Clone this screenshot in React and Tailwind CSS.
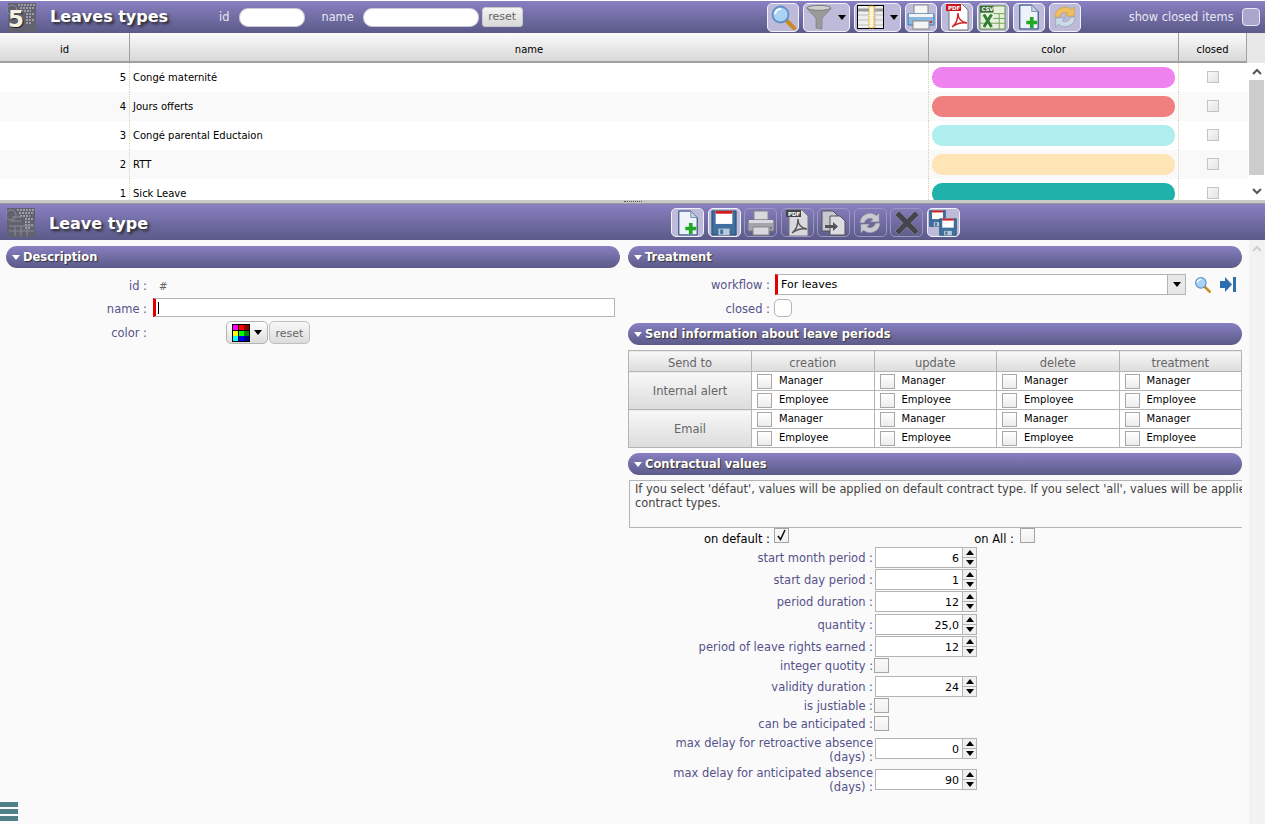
import React from 'react';

const FONT = 'font-["DejaVu_Sans",Verdana,sans-serif]';

const leaveTypes = [
  { id: 5, name: 'Congé maternité', color: '#ee82ee' },
  { id: 4, name: 'Jours offerts', color: '#f08080' },
  { id: 3, name: 'Congé parental Eductaion', color: '#afeeee' },
  { id: 2, name: 'RTT', color: '#ffe4b5' },
  { id: 1, name: 'Sick Leave', color: '#20b2aa' },
];

// --- icons ---
function Logo({ five }) {
  return (
    <svg width="30" height="31" viewBox="0 0 30 31" className="shrink-0">
      <rect x="1" y="1" width="28" height="29" fill="#62626f" />
      <path d="M11 3h17M13 6h15M14 9h10M19 12h8M19 15h6M19 18h8M19 21h5" stroke="#d8d8e0" strokeWidth="1" strokeDasharray="2 1" />
      <circle cx="5" cy="8" r="5" fill="none" stroke="#8a8a9c" strokeWidth="1" />
      {five ? (
        <>
          <text x="2" y="26" fontSize="23" fontWeight="700" fill="#1c1c24" fontFamily="DejaVu Sans">5</text>
          <text x="1" y="25" fontSize="23" fontWeight="700" fill="#f6f2e2" fontFamily="DejaVu Sans">5</text>
        </>
      ) : (
        <path d="M6 10h9M5 14h10M3 19h25M3 24h25M9 19v10M15 19v10M21 19v10" stroke="#8a8a98" strokeWidth="1" fill="none" />
      )}
    </svg>
  );
}

const Caret = () => (
  <svg width="8" height="5" viewBox="0 0 8 5"><path d="M0 0h8L4 5z" fill="#000" /></svg>
);

const SearchIcon = ({ size = 26 }) => (
  <svg width={size} height={size} viewBox="0 0 26 26">
    <path d="M16 16l8 8" stroke="#c98a20" strokeWidth="4" strokeLinecap="round" />
    <circle cx="10.500" cy="10.500" r="8" fill="#a9d2f5" stroke="#5d90c8" strokeWidth="1.800" />
    <path d="M5 10a6 6 0 0 1 6-5" stroke="#fff" strokeWidth="2" fill="none" />
  </svg>
);

const FunnelIcon = () => (
  <svg width="26" height="26" viewBox="0 0 26 26">
    <ellipse cx="13" cy="4" rx="12" ry="2.600" fill="#d0d0d0" stroke="#777" />
    <path d="M1 4c3 5 8 8 9 11v9l6 1V15c1-3 6-6 9-11-4 3-20 3-24 0z" fill="#9a9a9a" stroke="#777" strokeWidth=".6" />
  </svg>
);

const ColumnsIcon = () => (
  <svg width="27" height="24" viewBox="0 0 27 24">
    <rect x=".5" y=".5" width="26" height="23" fill="#eee" stroke="#000" />
    <path d="M1 5h25" stroke="#999" strokeWidth="3" />
    <path d="M18 1v22M1 10h25M1 15h25M1 20h25" stroke="#bbb" />
    <rect x="12" y="1" width="5" height="22" fill="#fdf6d8" stroke="#e69a00" strokeDasharray="1.500 1" />
  </svg>
);

const PrintIcon = ({ off }) => {
  const c = off ? ['#d8d8de', '#a4a4ae', '#77778a'] : ['#f4f4f4', '#8ab8dc', '#3f7fb5'];
  return (
    <svg width="28" height="26" viewBox="0 0 28 26">
      <rect x="7" y="1" width="14" height="9" fill={c[0]} stroke="#888" />
      <path d="M1 10h26v11H1z" fill={c[1]} stroke={c[2]} />
      <rect x="2" y="10" width="24" height="3" fill={c[0]} />
      <rect x="6" y="17" width="16" height="8" fill={c[0]} stroke="#888" />
      <rect x="23" y="17" width="2" height="2" fill={off ? '#777' : '#d22'} />
    </svg>
  );
};

const PdfIcon = ({ off }) => (
  <svg width="24" height="28" viewBox="0 0 24 28">
    <path d="M4 1h13l6 6v20H4z" fill={off ? '#d8d8de' : '#fff'} stroke="#777" />
    <rect x="1" y="1" width="15" height="7" fill={off ? '#444' : '#c8161d'} />
    <text x="3" y="6.500" fontSize="5.500" fontWeight="700" fill="#fff" fontFamily="DejaVu Sans">PDF</text>
    <path d="M7 24c4-3 6-8 6-14 0 6 3 9 9 10-6-1-11 1-15 4z" fill="none" stroke={off ? '#555' : '#d02020'} strokeWidth="1.400" />
  </svg>
);

const ExcelIcon = () => (
  <svg width="27" height="25" viewBox="0 0 28 26">
    <rect x="1" y="1" width="26" height="24" fill="#e6f0dc" stroke="#5d8a4a" />
    <rect x="1" y="1" width="14" height="7" fill="#3d6b35" />
    <text x="2.500" y="6.500" fontSize="5.500" fontWeight="700" fill="#fff" fontFamily="DejaVu Sans">CSV</text>
    <path d="M15 9h12M15 14h12M15 19h12M21 9v16M1 19h14" stroke="#6fa35a" />
    <path d="M5 10l8 13M13 10L5 23" stroke="#2e7d32" strokeWidth="3" />
  </svg>
);

const NewIcon = () => (
  <svg width="22" height="26" viewBox="0 0 24 28">
    <path d="M2 1h13l7 7v19H2z" fill="#eef3fb" stroke="#0a2a6a" />
    <path d="M15 1v7h7z" fill="#c4d4ea" stroke="#7a8cab" />
    <path d="M13 14h4v4h4v4h-4v4h-4v-4H9v-4h4z" fill="#22a822" />
  </svg>
);

const RefreshIcon = ({ off }) => {
  const a = off ? '#c8c8d0' : '#efc060';
  const b = off ? '#c8c8d0' : '#ccdce6';
  const edge = off ? '#77778a' : '#8c96a8';
  return (
    <svg width="26" height="26" viewBox="0 0 28 28">
      <path d="M3 14a11 11 0 0 1 18-8l3-3v10H14l3-3a6 6 0 0 0-9 4z" fill={a} stroke={off ? edge : '#c49a40'} strokeWidth=".7" />
      <path d="M25 14a11 11 0 0 1-18 8l-3 3V15h10l-3 3a6 6 0 0 0 9-4z" fill={b} stroke={edge} strokeWidth=".7" />
    </svg>
  );
};

const SaveIcon = ({ x = 0, y = 0, s = 26 }) => (
  <svg width={s} height={s} viewBox="0 0 28 28" x={x} y={y}>
    <path d="M1 1h26v26H1z" fill="#3e6f9e" stroke="#23476b" />
    <rect x="5" y="1" width="18" height="14" fill="#fff" />
    <rect x="5" y="1" width="18" height="3" fill="#d01c1c" />
    <rect x="8" y="20" width="12" height="7" fill="#b8c8d8" />
    <rect x="10" y="21" width="3" height="5" fill="#3e6f9e" />
  </svg>
);

const CopyIcon = () => (
  <svg width="26" height="26" viewBox="0 0 26 26">
    <path d="M1 1h11l4 4v16H1z" fill="#c8c8d0" stroke="#555" />
    <path d="M9 6h10l5 5v14H9z" fill="#dcdce2" stroke="#555" />
    <path d="M4 15h8v-3l5 4.500-5 4.500v-3H4z" fill="#555" />
  </svg>
);

const CrossIcon = () => (
  <svg width="26" height="26" viewBox="0 0 26 26">
    <path d="M5 1l8 8 8-8 4 4-8 8 8 8-4 4-8-8-8 8-4-4 8-8-8-8z" fill="#45454f" stroke="#8a8a94" strokeWidth=".7" />
  </svg>
);

const SaveAllIcon = () => (
  <svg width="28" height="26" viewBox="0 0 28 26">
    <SaveIcon x={0} y={0} s={17} />
    <SaveIcon x={10} y={8} s={18} />
  </svg>
);

const PaletteIcon = () => (
  <svg width="18" height="18" viewBox="0 0 18 18" shapeRendering="crispEdges">
    <rect width="18" height="18" fill="#000" />
    {['#f0f', '#f00', '#800', '#ff0', '#0f0', '#080', '#0ff', '#00f', '#008'].map((c, i) => (
      <rect key={i} x={1 + (i % 3) * 5.5} y={1 + Math.floor(i / 3) * 5.5} width="5" height="5" fill={c} />
    ))}
  </svg>
);

const GoIcon = () => (
  <svg width="16" height="15" viewBox="0 0 16 15">
    <path d="M0 4h5V0l7 7.500-7 7.500v-4H0z" fill="#2f6fb0" />
    <rect x="13" y="0" width="3" height="15" fill="#2f6fb0" />
  </svg>
);

const Chevron = ({ up, color = '#555' }) => (
  <svg width="10" height="7" viewBox="0 0 10 7" fill="none">
    <path d={up ? 'M1 6l4-4 4 4' : 'M1 1l4 4 4-4'} stroke={color} strokeWidth="2" />
  </svg>
);

// --- toolbar ---
function ToolBtn({ children, off, wide, narrow }) {
  return (
    <div
      className={`flex items-center justify-center gap-[6px] rounded-[5px] border h-[29px] overflow-hidden ${wide ? 'w-[47px]' : narrow ? 'w-[32px]' : 'w-[33px]'} ${
        off ? 'border-[#9a97c0] bg-transparent' : 'border-[#f0f0f8] bg-[#bdbbd9]'
      }`}
    >
      {children}
    </div>
  );
}

const bar = 'bg-gradient-to-b from-[#8880c2] to-[#5b5a88]';

function SmallCheck({ checked, soft }) {
  return (
    <div
      className={`w-[15px] h-[15px] shrink-0 border flex items-center justify-center ${
        soft ? 'border-[#a4a4a4] bg-gradient-to-b from-[#fafafa] to-[#f0f0f0]' : 'border-[#a8a8a8] bg-gradient-to-b from-[#fff] to-[#ececec]'
      }`}
    >
      {checked && (
        <svg width="13" height="13" viewBox="0 0 13 13" fill="none">
          <path d="M3 7l2.500 3.500L10 1" stroke="#111" strokeWidth="1.600" />
        </svg>
      )}
    </div>
  );
}

function Section({ title, className = '' }) {
  return (
    <div className={`h-[22px] rounded-[11px] ${bar} flex items-center pl-[6px] gap-[3px] text-[11.500px] font-bold text-white [text-shadow:1px_1px_1px_#333] ${className}`}>
      <svg width="8" height="5" viewBox="0 0 8 5"><path d="M0 0h8L4 5z" fill="#fff" /></svg>
      <span className="pt-px">{title}</span>
    </div>
  );
}

function ListPanel() {
  return (
    <div className="h-[200px] flex flex-col overflow-hidden bg-white">
      <div className={`h-[32px] shrink-0 mt-[1px] ${bar} flex items-center text-white`}>
        <div className="ml-[7px]"><Logo five /></div>
        <div className="ml-[13px] w-[169px] text-[16px] font-bold [text-shadow:2px_2px_3px_#222]">Leaves types</div>
        <span className="pt-[2px] text-[11.400px] text-[#e8e8f4]">id</span>
        <div className="ml-[10px] w-[66px] h-[19px] rounded-[9px] bg-white border border-[#c8c8d4]" />
        <span className="ml-[16px] pt-[2px] text-[11.400px] text-[#e8e8f4]">name</span>
        <div className="ml-[9px] w-[116px] h-[19px] rounded-[9px] bg-white border border-[#c8c8d4]" />
        <div className="ml-[3px] w-[41px] h-[20px] pt-px rounded-[3px] border border-[#c8c8c8] bg-gradient-to-b from-[#f4f4f4] to-[#d8d8d8] text-[11px] text-[#666] flex items-center justify-center">reset</div>
        <div className="ml-[244px] flex gap-[4px] items-center">
          <ToolBtn narrow><SearchIcon /></ToolBtn>
          <ToolBtn wide><FunnelIcon /><Caret /></ToolBtn>
          <ToolBtn wide><ColumnsIcon /><Caret /></ToolBtn>
          <ToolBtn narrow><PrintIcon /></ToolBtn>
          <ToolBtn narrow><PdfIcon /></ToolBtn>
          <ToolBtn narrow><ExcelIcon /></ToolBtn>
          <ToolBtn narrow><NewIcon /></ToolBtn>
          <ToolBtn narrow><RefreshIcon /></ToolBtn>
        </div>
        <span className="ml-[48px] pt-[2px] text-[11.400px] text-[#e8e8f4] whitespace-nowrap">show closed items</span>
        <div className="ml-[8px] w-[18px] h-[18px] rounded-[4px] border border-[#e8e8f4] bg-[#a8a6cc]" />
      </div>

      <div className="h-[30px] shrink-0 flex text-[10px] text-black bg-[#e8e8e8]">
        <div className="flex-1 flex bg-gradient-to-b from-[#fbfbfb] to-[#d8d8d8] border-b-2 border-[#a0a0a0] max-w-[1247px]">
          <div className="w-[130px] pt-[5px] flex items-center justify-center border-r border-[#a0a0a0]">id</div>
          <div className="w-[799px] pt-[5px] flex items-center justify-center border-r border-[#a0a0a0]">name</div>
          <div className="w-[250px] pt-[5px] flex items-center justify-center border-r border-[#a0a0a0]">color</div>
          <div className="w-[68px] pt-[5px] flex items-center justify-center border-r border-[#a0a0a0]">closed</div>
        </div>
      </div>

      <div className="flex flex-1 min-h-0">
        <div className="w-[1248px] overflow-hidden">
          {leaveTypes.map((t, i) => (
            <div key={t.id} className={`h-[29px] flex text-[10px] text-black ${i % 2 ? 'bg-[#f9f9f9]' : 'bg-white'}`}>
              <div className="w-[130px] flex items-center justify-end pr-[3px] border-r border-dotted border-[#d8cfae]">{t.id}</div>
              <div className="w-[799px] flex items-center pl-[3px] border-r border-dotted border-[#d8cfae]">{t.name}</div>
              <div className="w-[250px] flex items-center pl-[3px] border-r border-dotted border-[#d8cfae]">
                <div className="w-[243px] h-[21px] rounded-[10px]" style={{ backgroundColor: t.color }} />
              </div>
              <div className="w-[68px] flex items-center justify-center">
                <div className="w-[12px] h-[12px] mb-[2px] border border-[#c4c4c4] bg-gradient-to-br from-[#f8f8f8] to-[#e4e4e4]" />
              </div>
            </div>
          ))}
        </div>
        <div className="w-[17px] flex flex-col bg-white">
          <div className="h-[17px] flex items-center justify-center"><Chevron up /></div>
          <div className="h-[95px] mx-[1px] bg-[#cdcdcd]" />
          <div className="flex-1" />
          <div className="h-[17px] flex items-center justify-center"><Chevron /></div>
        </div>
      </div>
    </div>
  );
}

function DescriptionPanel() {
  return (
    <div className="w-[614px] shrink-0">
      <Section title="Description" />
      <div className="mt-[9px] flex items-center h-[18px]">
        <span className="w-[141px] pt-[2px] text-right text-[#55528a]">id :</span>
        <span className="ml-[12px] pt-[1px] text-[10px] text-[#666]">#</span>
      </div>
      <div className="mt-[3px] flex items-center h-[19px]">
        <span className="w-[141px] pt-[5px] text-right text-[#55528a]">name :</span>
        <div className="ml-[6px] w-[462px] h-[19px] flex items-center bg-white border border-[#b4b4b4] border-l-[3px] border-l-[#e00000]">
          <div className="ml-[2px] w-px h-[12px] bg-black" />
        </div>
      </div>
      <div className="mt-[4px] flex items-start">
        <span className="w-[141px] text-right text-[#55528a] mt-[4px]">color :</span>
        <div className="ml-[79px] w-[42px] h-[23px] rounded-[5px] border border-[#b4b4b4] bg-gradient-to-b from-[#fff] to-[#dcdcdc] flex items-center justify-center gap-[4px]">
          <PaletteIcon /><Caret />
        </div>
        <div className="ml-px w-[41px] h-[23px] rounded-[5px] border border-[#c0c0c0] bg-gradient-to-b from-[#f8f8f8] to-[#dcdcdc] pt-[3px] text-[11px] text-[#666] flex items-center justify-center">reset</div>
      </div>
    </div>
  );
}

function NotifyCell({ label }) {
  return (
    <td className="border border-[#b4b4b4] h-[19px] p-0 bg-white">
      <div className="flex items-center pl-[5px] text-[10px] leading-[14px] text-black">
        <SmallCheck />
        <span className="ml-[7px]">{label}</span>
      </div>
    </td>
  );
}

function NotifyTable() {
  const thCls = 'border border-[#b4b4b4] bg-gradient-to-b from-[#f8f8f8] to-[#dcdcdc] font-normal text-[#666] text-[11.500px] leading-[14px] p-0';
  const groups = ['Internal alert', 'Email'];
  return (
    <table className="mt-[5px] w-[614px] table-fixed border-collapse">
      <thead>
        <tr className="h-[21px]">
          <th className={`${thCls} pt-[3px] w-[123px]`}>Send to</th>
          {['creation', 'update', 'delete', 'treatment'].map((h) => (
            <th key={h} className={`${thCls} pt-[3px]`}>{h}</th>
          ))}
        </tr>
      </thead>
      <tbody>
        {groups.map((g) => (
          <React.Fragment key={g}>
            <tr>
              <td rowSpan={2} className={`${thCls} pt-px text-center`}>{g}</td>
              {[0, 1, 2, 3].map((i) => <NotifyCell key={i} label="Manager" />)}
            </tr>
            <tr>
              {[0, 1, 2, 3].map((i) => <NotifyCell key={i} label="Employee" />)}
            </tr>
          </React.Fragment>
        ))}
      </tbody>
    </table>
  );
}

function FieldLabel({ children, className = '' }) {
  return <div className={`w-[245px] text-right text-[#55528a] ${className}`}>{children}</div>;
}

function Spinner({ value, className = '' }) {
  return (
    <>
      <div className={`ml-[2px] w-[88px] h-[21px] flex items-center justify-end pr-[3px] pt-[4px] bg-white border border-[#b4b4b4] text-[11px] text-black ${className}`}>{value}</div>
      <div className={`w-[14px] h-[21px] flex flex-col border-y border-r border-[#b4b4b4] bg-[#f0f0f0] ${className}`}>
        <div className="flex-1 flex items-center justify-center border-b border-[#b4b4b4]">
          <svg width="8" height="5" viewBox="0 0 8 5"><path d="M0 5h8L4 0z" fill="#000" /></svg>
        </div>
        <div className="flex-1 flex items-center justify-center"><Caret /></div>
      </div>
    </>
  );
}

function NumberField({ label, value, className = '' }) {
  return (
    <div className={`flex items-center ${className}`}>
      <FieldLabel className="pt-[2px] leading-[13px]">{label}</FieldLabel>
      <Spinner value={value} />
    </div>
  );
}

// two line label: the input sits at the top, not in the middle
function TallField({ lines, value, className = '', inputClass = '' }) {
  return (
    <div className={`flex items-start ${className}`}>
      <FieldLabel className="leading-[14px]">{lines[0]}<br />{lines[1]}</FieldLabel>
      <Spinner value={value} className={inputClass} />
    </div>
  );
}

function CheckField({ label, className = '' }) {
  return (
    <div className={`flex items-center h-[15px] ${className}`}>
      <FieldLabel className="pt-[3px]">{label}</FieldLabel>
      <div className="ml-px"><SmallCheck soft /></div>
    </div>
  );
}

function RightPanel() {
  return (
    <div className="w-[614px] shrink-0">
      <Section title="Treatment" />
      <div className="mt-[6px] flex items-center h-[21px]">
        <span className="w-[142px] pt-[2px] text-right text-[#55528a]">workflow :</span>
        <div className="ml-[5px] w-[411px] h-[21px] flex items-center bg-white border border-[#b4b4b4] border-l-[3px] border-l-[#e00000]">
          <span className="flex-1 pl-[3px] pt-px text-[11px] text-black">For leaves</span>
          <div className="w-[18px] h-full flex items-center justify-center bg-[#e8e8e8] border-l border-[#b4b4b4]"><Caret /></div>
        </div>
        <div className="ml-[8px]"><SearchIcon size={17} /></div>
        <div className="ml-[9px]"><GoIcon /></div>
      </div>
      <div className="mt-[4px] flex items-center h-[18px]">
        <span className="w-[142px] pt-[4px] text-right text-[#55528a]">closed :</span>
        <div className="ml-[4px] w-[18px] h-[18px] rounded-[5px] bg-white border border-[#b4b4b4]" />
      </div>

      <Section title="Send information about leave periods" className="mt-[6px]" />
      <NotifyTable />

      <Section title="Contractual values" className="mt-[5px]" />
      <div className="mt-[5px] h-[48px] ml-px pl-[5px] pt-[2px] border-y border-l border-[#b4b4b4] text-[11.400px] leading-[13.500px] text-[#444] whitespace-nowrap overflow-hidden">
        If you select 'défaut', values will be applied on default contract type. If you select 'all', values will be applied on all<br />contract types.
      </div>

      <div className="flex h-[19px] items-center">
        <span className="w-[142px] pt-[4px] text-right text-black">on default :</span>
        <div className="ml-[4px] -mt-[4px]"><SmallCheck checked soft /></div>
        <span className="ml-[180px] pt-[4px] w-[45px] text-right whitespace-nowrap text-black">on All :</span>
        <div className="ml-[6px] -mt-[4px]"><SmallCheck soft /></div>
      </div>

      <NumberField label="start month period :" value="6" />
      <NumberField label="start day period :" value="1" className="mt-px" />
      <NumberField label="period duration :" value="12" className="mt-px" />
      <NumberField label="quantity :" value="25,0" className="mt-[2px]" />
      <NumberField label="period of leave rights earned :" value="12" className="mt-px" />
      <CheckField label="integer quotity :" className="mt-px" />
      <NumberField label="validity duration :" value="24" className="mt-[3px]" />
      <CheckField label="is justiable :" className="mt-px" />
      <CheckField label="can be anticipated :" className="mt-[3px]" />
      <TallField lines={['max delay for retroactive absence', '(days) :']} value="0" className="mt-[5px]" inputClass="mt-[2px]" />
      <TallField lines={['max delay for anticipated absence', '(days) :']} value="90" className="mt-[2px]" inputClass="mt-[3px]" />
    </div>
  );
}

function DetailPanel() {
  return (
    <div className="flex-1 flex flex-col min-h-0">
      <div className={`h-[36px] shrink-0 ${bar} flex items-center text-white`}>
        <div className="ml-[6px]"><Logo /></div>
        <div className="ml-[13px] mt-[3px] w-[622px] text-[16px] font-bold [text-shadow:2px_2px_3px_#222]">Leave type</div>
        <div className="flex gap-[3.500px] mt-px">
          <ToolBtn><NewIcon /></ToolBtn>
          <ToolBtn><SaveIcon /></ToolBtn>
          <ToolBtn off><PrintIcon off /></ToolBtn>
          <ToolBtn off><PdfIcon off /></ToolBtn>
          <ToolBtn off><CopyIcon /></ToolBtn>
          <ToolBtn off><RefreshIcon off /></ToolBtn>
          <ToolBtn off><CrossIcon /></ToolBtn>
          <ToolBtn><SaveAllIcon /></ToolBtn>
        </div>
      </div>
      <div className="flex-1 flex min-h-0 bg-[#fafafa]">
        <div className="flex-1 flex gap-[8px] pl-[6px] pt-[6px] overflow-hidden text-[11.500px]">
          <DescriptionPanel />
          <RightPanel />
        </div>
        <div className="w-[16px] shrink-0 flex flex-col items-center bg-[#f2f2f2] pt-[5px]">
          <Chevron up color="#cfcfcf" />
        </div>
      </div>
    </div>
  );
}

export default function App() {
  return (
    <div className={`relative w-[1265px] h-[824px] overflow-hidden flex flex-col text-[11px] ${FONT}`}>
      <ListPanel />
      <div className="h-[4px] shrink-0 bg-[#c8c8c8] border-b border-[#999] flex items-center justify-center">
        <div className="w-[18px] h-px border-t border-dotted border-[#555]" />
      </div>
      <DetailPanel />
      {/* menu toggle over the bottom left corner */}
      <div className="absolute left-0 top-[802px] flex flex-col gap-[2px]">
        <div className="w-[18px] h-[5px] bg-[#4f8085]" />
        <div className="w-[18px] h-[5px] bg-[#4f8085]" />
        <div className="w-[18px] h-[5px] bg-[#4f8085]" />
      </div>
    </div>
  );
}
